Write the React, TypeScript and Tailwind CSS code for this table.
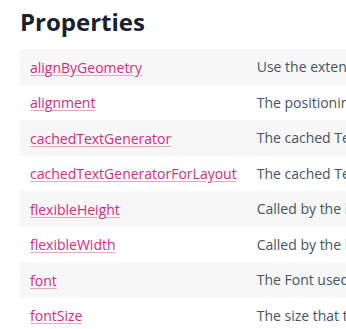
const rows = [
  { name: "alignByGeometry", desc: "Use the extents of glyph geometry to perform horizontal alignment rather than glyph metrics." },
  { name: "alignment", desc: "The positioning of the text relative to its RectTransform." },
  { name: "cachedTextGenerator", desc: "The cached TextGenerator used when generating visible Text." },
  { name: "cachedTextGeneratorForLayout", desc: "The cached TextGenerator used when determine Layout." },
  { name: "flexibleHeight", desc: "Called by the layout system." },
  { name: "flexibleWidth", desc: "Called by the layout system." },
  { name: "font", desc: "The Font used by the text." },
  { name: "fontSize", desc: "The size that the Font should render at." },
];

const App = () => {
  return (
    <div className="w-[346px] h-[329px] overflow-hidden bg-white pl-5 pt-[4px] font-['Open_Sans',sans-serif]">
      <h2 className="text-[24px] font-bold leading-[36px] text-[#18222d] mb-[9px]">Properties</h2>
      <table className="border-collapse">
        <tbody>
          {rows.map((r, i) => (
            <tr key={r.name} className={i % 2 === 0 ? "bg-[#f7f7f7]" : "bg-white"}>
              <td className="h-[35.5px] px-[10px] align-middle whitespace-nowrap">
                <a href="#" className="text-[14px] text-[#d12c7e] underline decoration-[#e8a6c6] underline-offset-[2px]">
                  {r.name}
                </a>
              </td>
              <td className="pl-[10px] pr-4 align-middle whitespace-nowrap text-[14px] text-[#455463]">{r.desc}</td>
            </tr>
          ))}
        </tbody>
      </table>
    </div>
  );
};

export default App;
